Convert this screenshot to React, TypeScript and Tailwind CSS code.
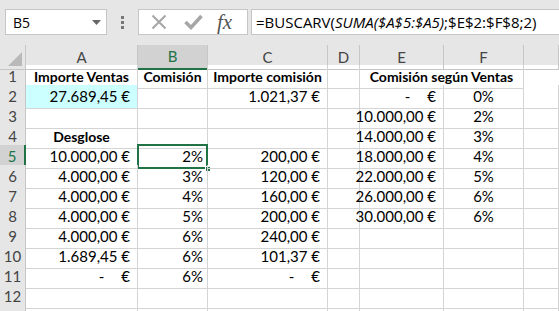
import React from "react";

type Cell = { t?: React.ReactNode; a?: "r" | "c" | "p"; b?: boolean; bg?: string; span?: number };

function Eur({ v }: { v: string }) {
    if (v === "-") {
        return (
            <span className="flex">
                <span>-</span>
                <span className="ml-[17px]">€</span>
            </span>
        );
    }
    return <span>{v} €</span>;
}

const e = (v: string): Cell => ({ t: <Eur v={v} />, a: "r" });
const p = (v: string): Cell => ({ t: v, a: "p" });
const c = (v: string): Cell => ({ t: v, a: "c" });
const x: Cell = {};

const rows: Cell[][] = [
    [
        { t: "Importe Ventas", a: "c", b: true },
        { t: "Comisión", a: "c", b: true },
        { t: "Importe comisión", a: "c", b: true },
        x,
        { t: "Comisión según Ventas", a: "c", b: true, span: 2 },
        x,
    ],
    [{ ...e("27.689,45"), bg: "bg-[#ccffff]" }, x, e("1.021,37"), x, e("-"), c("0%"), x],
    [x, x, x, x, e("10.000,00"), c("2%"), x],
    [{ t: "Desglose", a: "c", b: true }, x, x, x, e("14.000,00"), c("3%"), x],
    [e("10.000,00"), p("2%"), e("200,00"), x, e("18.000,00"), c("4%"), x],
    [e("4.000,00"), p("3%"), e("120,00"), x, e("22.000,00"), c("5%"), x],
    [e("4.000,00"), p("4%"), e("160,00"), x, e("26.000,00"), c("6%"), x],
    [e("4.000,00"), p("5%"), e("200,00"), x, e("30.000,00"), c("6%"), x],
    [e("4.000,00"), p("6%"), e("240,00"), x, x, x, x],
    [e("1.689,45"), p("6%"), e("101,37"), x, x, x, x],
    [e("-"), p("6%"), e("-"), x, x, x, x],
    [x, x, x, x, x, x, x],
    [x, x, x, x, x, x, x],
];

const cols = ["A", "B", "C", "D", "E", "F", ""];
const grid = "grid grid-cols-[26px_112px_70px_120px_32px_84px_80px_1fr]";

export default function App() {
    return (
        <div className="w-[559px] h-[311px] overflow-hidden bg-white font-['Lato',sans-serif] text-[15px] text-black">
            {/* formula bar */}
            <div className="h-[45px] bg-[#e6e6e6] flex items-start pt-[9px] pl-[5px]">
                <div className="w-[102px] h-[26px] bg-white border border-[#c6c6c6] flex items-center justify-between pl-[7px] pr-[5px] font-['Open_Sans',sans-serif] text-[14px]">
                    <span>B5</span>
                    <svg width="9" height="5" viewBox="0 0 9 5">
                        <path d="M0 0h9L4.5 5z" fill="#666" />
                    </svg>
                </div>
                <div className="w-[31px] h-[26px] flex flex-col items-center justify-center gap-[2px]">
                    <span className="w-[3px] h-[3px] bg-[#777]" />
                    <span className="w-[3px] h-[3px] bg-[#777]" />
                    <span className="w-[3px] h-[3px] bg-[#777]" />
                </div>
                <div className="w-[110px] h-[26px] bg-white border border-[#c6c6c6] flex items-center pl-[12px]">
                    <svg width="16" height="16" viewBox="0 0 16 16">
                        <path d="M1.5 1.5l13 13M14.5 1.5l-13 13" stroke="#a6a6a6" strokeWidth="2" />
                    </svg>
                    <svg width="19" height="16" viewBox="0 0 19 16" className="ml-[17px]">
                        <path d="M1.5 8l5.5 5.5L17.5 2" stroke="#a6a6a6" strokeWidth="3.5" fill="none" />
                    </svg>
                    <span className="ml-[14px] font-['Liberation_Serif',serif] italic text-[21px] text-[#555] leading-none">
                        fx
                    </span>
                </div>
                <div className="ml-[3px] flex-1 h-[26px] bg-white border border-r-0 border-[#c6c6c6] flex items-center pl-[4px] font-['Open_Sans',sans-serif] text-[15px]">
                    =BUSCARV(<span className="italic">SUMA($A$5:$A5)</span>;$E$2:$F$8;2)
                </div>
            </div>

            {/* column header */}
            <div className={`${grid} h-[20px] bg-[#e6e6e6] text-[#444]`}>
                <div className="border-r border-b border-[#c6c6c6] relative">
                    <svg width="14" height="14" viewBox="0 0 14 14" className="absolute right-[3px] bottom-[3px]">
                        <path d="M14 0v14H0z" fill="#b9b9b9" />
                    </svg>
                </div>
                {cols.map((h) => (
                    <div
                        key={h || "g"}
                        className={`flex items-center justify-center border-r ${
                            h === "B"
                                ? "bg-[#d2d2d2] border-b-2 border-b-[#217346] text-[#217346] border-r-[#c6c6c6]"
                                : "border-b border-[#c6c6c6]"
                        }`}
                    >
                        {h}
                    </div>
                ))}
            </div>

            {/* rows */}
            {rows.map((r, i) => (
                <div key={i} className={`${grid} h-[20px]`}>
                    <div
                        className={`flex items-center justify-center border-b ${
                            i === 4
                                ? "bg-[#d2d2d2] text-[#217346] border-r-2 border-r-[#217346] border-b-[#c6c6c6]"
                                : "bg-[#e6e6e6] text-[#444] border-r border-[#c6c6c6]"
                        }`}
                    >
                        {i < 12 ? i + 1 : ""}
                    </div>
                    {r.map((cell, j) => {
                        if (i === 0 && j === 5) return null;
                        const sel = i === 4 && j === 1;
                        return (
                            <div
                                key={j}
                                className={`relative flex items-center whitespace-nowrap border-r border-b border-[#d4d4d4] ${
                                    cell.span === 2 ? "col-span-2" : ""
                                } ${cell.bg ?? ""} ${cell.b ? "font-bold text-[14px]" : ""} ${
                                    cell.a === "r"
                                        ? "justify-end pr-[7px]"
                                        : cell.a === "p"
                                          ? "justify-end pr-[4px]"
                                          : cell.a === "c"
                                            ? "justify-center"
                                            : ""
                                }`}
                            >
                                {cell.t}
                                {sel && (
                                    <>
                                        <div className="absolute left-[-1px] top-[-1px] right-[-1px] bottom-[-1px] border-2 border-[#217346]" />
                                        <div className="absolute right-[-4px] bottom-[-4px] w-[6px] h-[6px] bg-[#217346] border border-white" />
                                    </>
                                )}
                            </div>
                        );
                    })}
                </div>
            ))}
        </div>
    );
}
